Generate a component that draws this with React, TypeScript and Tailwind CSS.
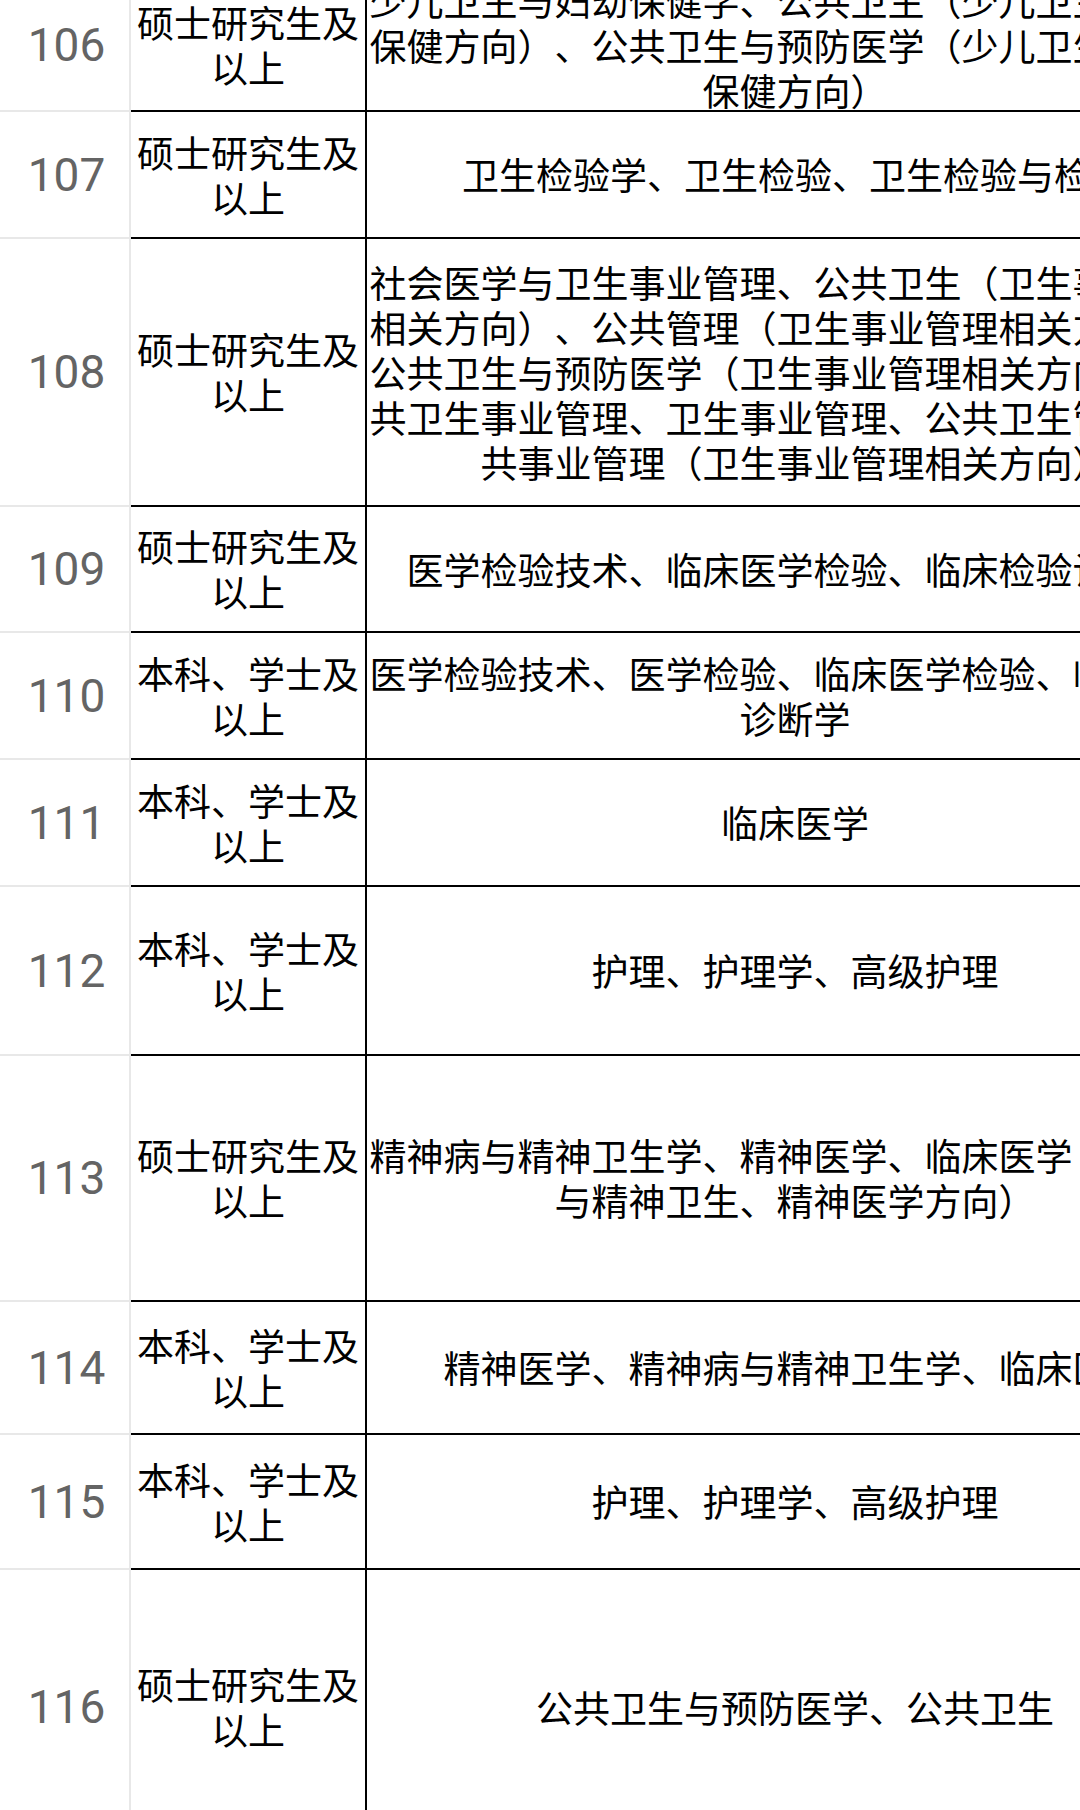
import React from 'react'

type Row = { no: string; edu: string; major: string; h: string }

const rows: Row[] = [
  {
    no: '106',
    edu: '硕士研究生及以上',
    major: '少儿卫生与妇幼保健学、公共卫生（少儿卫生与妇幼保健方向）、公共卫生与预防医学（少儿卫生与妇幼保健方向）',
    h: 'h-[132px]',
  },
  { no: '107', edu: '硕士研究生及以上', major: '卫生检验学、卫生检验、卫生检验与检疫', h: 'h-[127px]' },
  {
    no: '108',
    edu: '硕士研究生及以上',
    major:
      '社会医学与卫生事业管理、公共卫生（卫生事业管理相关方向）、公共管理（卫生事业管理相关方向）、公共卫生与预防医学（卫生事业管理相关方向）、公共卫生事业管理、卫生事业管理、公共卫生管理、公共事业管理（卫生事业管理相关方向）',
    h: 'h-[268px]',
  },
  { no: '109', edu: '硕士研究生及以上', major: '医学检验技术、临床医学检验、临床检验诊断学', h: 'h-[126px]' },
  { no: '110', edu: '本科、学士及以上', major: '医学检验技术、医学检验、临床医学检验、临床检验诊断学', h: 'h-[127px]' },
  { no: '111', edu: '本科、学士及以上', major: '临床医学', h: 'h-[127px]' },
  { no: '112', edu: '本科、学士及以上', major: '护理、护理学、高级护理', h: 'h-[169px]' },
  {
    no: '113',
    edu: '硕士研究生及以上',
    major: '精神病与精神卫生学、精神医学、临床医学（精神病与精神卫生、精神医学方向）',
    h: 'h-[246px]',
  },
  { no: '114', edu: '本科、学士及以上', major: '精神医学、精神病与精神卫生学、临床医学', h: 'h-[133px]' },
  { no: '115', edu: '本科、学士及以上', major: '护理、护理学、高级护理', h: 'h-[135px]' },
  { no: '116', edu: '硕士研究生及以上', major: '公共卫生与预防医学、公共卫生', h: 'h-[276px]' },
]

function TableRow({ row }: { row: Row }) {
  return (
    <div className={`flex ${row.h}`}>
      {/* index column */}
      <div className="w-[131px] shrink-0 flex items-center justify-center pl-[4px] border-r-2 border-b-2 border-[#e8e8e8] bg-white">
        <span className="font-['Roboto',sans-serif] text-[46px] leading-none text-[#646464]">{row.no}</span>
      </div>
      {/* education */}
      <div className="w-[236px] shrink-0 flex items-center justify-center border-r-2 border-b-2 border-black">
        <p className="w-full text-center text-[37px] leading-[45px] text-black">{row.edu}</p>
      </div>
      {/* majors */}
      <div className="w-[856px] shrink-0 flex items-center justify-center border-b-2 border-black">
        <p className="w-full text-center text-[37px] leading-[45px] text-black">{row.major}</p>
      </div>
    </div>
  )
}

export default function App() {
  return (
    <div className="w-[1080px] h-[1810px] overflow-hidden bg-white font-['Noto_Sans_CJK_SC',sans-serif] [text-spacing-trim:space-all]">
      <div className="-mt-[20px] w-[1223px]">
        {rows.map((r) => (
          <TableRow key={r.no} row={r} />
        ))}
      </div>
    </div>
  )
}
